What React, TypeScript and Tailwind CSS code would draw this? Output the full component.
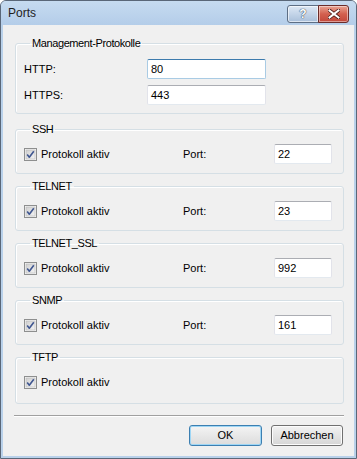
import React from 'react';

const font = { fontFamily: '"Liberation Sans", Arial, sans-serif' };

const TextBox: React.FC<{ value: string; w: string; focused?: boolean }> = ({ value, w, focused }) => (
  <div
    className={`${w} h-[20px] bg-white flex items-center pl-[3px] text-[11px] rounded-[2px] border ${
      focused
        ? 'border-[#a9cbe4] border-t-[#3d7bad]'
        : 'border-[#e2e3ea] border-t-[#abadb3] border-b-[#e3e9ef]'
    }`}
  >
    {value}
  </div>
);

const CheckBox: React.FC = () => (
  <svg width="13" height="13" viewBox="0 0 13 13" className="shrink-0">
    <defs>
      <linearGradient id="cbFill" x1="0" y1="0" x2="1" y2="1">
        <stop offset="0" stopColor="#cfcfcf" />
        <stop offset="1" stopColor="#f4f4f4" />
      </linearGradient>
    </defs>
    <rect x="0.5" y="0.5" width="12" height="12" fill="#f4f4f4" stroke="#8e8f8f" />
    <rect x="2" y="2" width="9" height="9" fill="url(#cbFill)" stroke="#b8b8b8" strokeWidth="0.6" />
    <path d="M3.2 6.6 L5.3 9.2 L9.8 3.2" fill="none" stroke="#3f5690" strokeWidth="1.6" strokeLinejoin="round" />
  </svg>
);

const Group: React.FC<{ title: string; className?: string; children: React.ReactNode }> = ({ title, className, children }) => (
  <fieldset
    className={`border border-[#d5dfe5] rounded-[3px] shadow-[inset_1px_1px_0_#ffffff] pl-[8px] pr-[10px] ${className ?? ''}`}
  >
    <legend className="ml-[6px] px-[2px] leading-[13px] text-[11px] tracking-[-0.4px]">{title}</legend>
    {children}
  </fieldset>
);

const ProtoGroup: React.FC<{ title: string; port?: string; className?: string }> = ({ title, port, className }) => (
  <Group title={title} className={`pb-[9px] ${className ?? ''}`}>
    <div className="mt-[8px] h-[20px] flex items-center text-[11px]">
      <div className="w-[159px] flex items-center gap-[4px]">
        <CheckBox />
        <span>Protokoll aktiv</span>
      </div>
      {port && (
        <>
          <span className="w-[91px]">Port:</span>
          <TextBox value={port} w="w-[58px]" />
        </>
      )}
    </div>
  </Group>
);

const App: React.FC = () => {
  return (
    <div
      className="w-[357px] h-[459px] flex flex-col bg-[#b9d1ea] border border-[#5a6778] rounded-t-[6px] px-[2px] pb-[2px] text-black"
      style={font}
    >
      {/* Title bar */}
      <div className="h-[24px] flex items-start bg-gradient-to-b from-[#c6dbf0] to-[#b4cde9] -mx-[2px] px-[7px] rounded-t-[5px]">
        <span className="text-[12px] leading-[24px] text-[#1e1e1e]">Ports</span>
        <div className="ml-auto mt-[4px] flex">
          <div className="w-[32px] h-[18px] rounded-l-[3px] border border-[#5d6e84] bg-gradient-to-b from-[#dde8f4] via-[#c3d4e8] to-[#a9bfda] shadow-[inset_0_0_0_1px_rgba(255,255,255,0.6)] flex items-center justify-center">
            <span className="text-[12px] font-bold text-white leading-none [text-shadow:0_0_1px_#28384f,0_0_1px_#28384f]">?</span>
          </div>
          <div className="w-[31px] h-[18px] -ml-[1px] rounded-r-[3px] border border-[#6b2c2a] bg-gradient-to-b from-[#e8a393] via-[#d3604f] to-[#c3473a] shadow-[inset_0_0_0_1px_rgba(255,255,255,0.45)] flex items-center justify-center">
            <svg width="12" height="10" viewBox="0 0 12 10">
              <path d="M1.5 1.5 L10.5 8.5 M10.5 1.5 L1.5 8.5" stroke="#4a1a16" strokeWidth="3.6" strokeLinecap="square" />
              <path d="M1.5 1.5 L10.5 8.5 M10.5 1.5 L1.5 8.5" stroke="#ffffff" strokeWidth="2" strokeLinecap="square" />
            </svg>
          </div>
        </div>
      </div>

      {/* Client area */}
      <div className="flex-1 bg-[#f0f0f0] flex flex-col pt-[12px]">
        <Group title="Management-Protokolle" className="ml-[12px] mr-[10px] pb-[8px]">
          <div className="mt-[9px] flex flex-col gap-[6px] text-[11px]">
            <div className="h-[20px] flex items-center">
              <span className="w-[123px]">HTTP:</span>
              <TextBox value="80" w="w-[119px]" focused />
            </div>
            <div className="h-[20px] flex items-center">
              <span className="w-[123px]">HTTPS:</span>
              <TextBox value="443" w="w-[119px]" />
            </div>
          </div>
        </Group>

        <div className="ml-[12px] mr-[10px] mt-[9px] flex flex-col gap-[6px]">
          <ProtoGroup title="SSH" port="22" />
          <ProtoGroup title="TELNET" port="23" />
          <ProtoGroup title="TELNET_SSL" port="992" />
          <ProtoGroup title="SNMP" port="161" />
          <ProtoGroup title="TFTP" className="pb-[11px]" />
        </div>

        {/* Separator */}
        <div className="ml-[11px] mr-[10px] mt-[11px] border-t border-[#a0a0a0] border-b border-b-white" />

        {/* Buttons */}
        <div className="mt-[8px] mr-[11px] flex justify-end gap-[9px] text-[11px]">
          <button className="w-[73px] h-[21px] rounded-[3px] border border-[#3c7fb1] bg-gradient-to-b from-[#f4f4f4] to-[#dcdcdc] shadow-[inset_0_0_0_1px_#9ed6f5]">
            OK
          </button>
          <button className="w-[72px] h-[21px] rounded-[3px] border border-[#707070] bg-gradient-to-b from-[#f2f2f2] to-[#d6d6d6] shadow-[inset_0_0_0_1px_#fcfcfc]">
            Abbrechen
          </button>
        </div>
      </div>
    </div>
  );
};

export default App;
